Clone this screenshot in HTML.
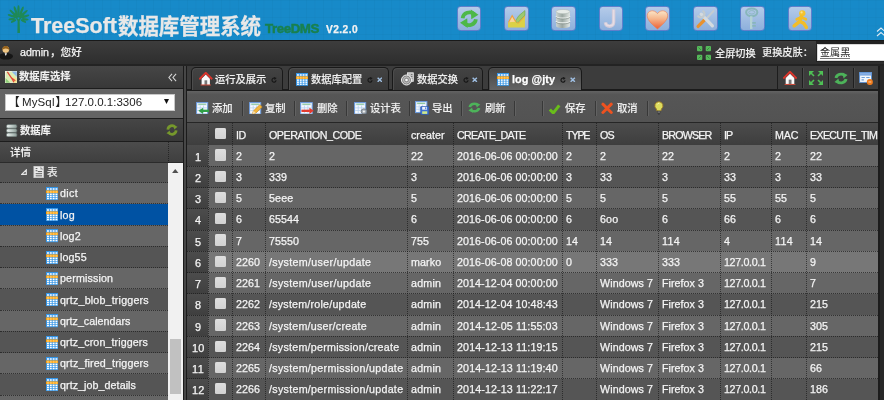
<!DOCTYPE html>
<html lang="zh"><head><meta charset="utf-8"><title>TreeSoft数据库管理系统</title>
<style>
html,body{margin:0;padding:0}
body{width:884px;height:400px;overflow:hidden;background:#2a2a2a;position:relative;font-family:"Liberation Sans","Noto Sans CJK SC",sans-serif;font-size:10.4px;color:#fff;line-height:1.3}
div,span,svg{position:absolute;box-sizing:border-box}
.t{will-change:transform;white-space:nowrap;color:#f4f4f4;-webkit-text-stroke:.25px currentColor}
.c{font-weight:500;-webkit-text-stroke:.12px currentColor;color:#f0f0f0}
#hdr{left:0;top:0;width:884px;height:40px;background-color:#178ac9;background-image:linear-gradient(rgba(0,0,0,.022) 1px,transparent 1px),linear-gradient(90deg,rgba(0,0,0,.022) 1px,transparent 1px);background-size:8.5px 8.5px}
.tb{top:5.5px;width:24.5px;height:25.5px;border-radius:3.5px;border:1px solid #607fcb;background:linear-gradient(#b5cbe9,#8db0dc)}
#ubar{left:0;top:41px;width:884px;height:23.5px;background:linear-gradient(#3d3d3d,#2d2d2d)}
.ph{background:linear-gradient(#464646,#383838);border-bottom:1px solid #1d1d1d;border-right:1.3px solid #1b1b1b}
.sep{width:2px;top:101px;height:14.5px;border-left:1px solid #383838;border-right:1px solid #626262}
.ck{width:11.3px;height:11.3px;border-radius:1.5px;background:linear-gradient(#dedede,#d2d2d2);box-shadow:0 0 .6px 0 #bbb}
.tab{top:66.6px;height:23px;border:1px solid #191919;border-bottom:none;border-radius:5px 5px 0 0;box-shadow:inset 1px 1px 0 #4c4c4c;background:linear-gradient(#434343,#383838)}
.vl{width:0;border-left:1px dotted rgba(20,20,20,.62)}
.hl{height:0;border-top:1px dotted rgba(20,20,20,.62)}
</style></head><body>

<div id="hdr"></div>
<svg style="left:4px;top:.8px" width="30" height="36" viewBox="0 0 30 36"><g fill="#1e8957"><ellipse cx="8.0" cy="18.1" rx="1.15" ry="3.6" transform="rotate(-95 8.0 18.1)"/><ellipse cx="7.7" cy="15.0" rx="1.15" ry="4.2" transform="rotate(-70 7.7 15.0)"/><ellipse cx="9.0" cy="12.0" rx="1.15" ry="4.6" transform="rotate(-45 9.0 12.0)"/><ellipse cx="11.7" cy="9.8" rx="1.15" ry="4.8" transform="rotate(-20 11.7 9.8)"/><ellipse cx="14.5" cy="8.9" rx="1.15" ry="4.6" transform="rotate(0 14.5 8.9)"/><ellipse cx="17.6" cy="9.9" rx="1.15" ry="4.8" transform="rotate(22 17.6 9.9)"/><ellipse cx="20.2" cy="12.2" rx="1.15" ry="4.6" transform="rotate(47 20.2 12.2)"/><ellipse cx="21.3" cy="15.3" rx="1.15" ry="4.2" transform="rotate(72 21.3 15.3)"/><ellipse cx="21.0" cy="18.3" rx="1.15" ry="3.6" transform="rotate(97 21.0 18.3)"/><ellipse cx="9.6" cy="20.1" rx="1.15" ry="3" transform="rotate(-118 9.6 20.1)"/><ellipse cx="19.4" cy="20.1" rx="1.15" ry="3" transform="rotate(118 19.4 20.1)"/><ellipse cx="12.3" cy="14.1" rx="1.15" ry="3" transform="rotate(-33 12.3 14.1)"/><ellipse cx="16.7" cy="14.1" rx="1.15" ry="3" transform="rotate(33 16.7 14.1)"/><ellipse cx="10.9" cy="15.4" rx="1.15" ry="2.8" transform="rotate(-60 10.9 15.4)"/><ellipse cx="18.1" cy="15.4" rx="1.15" ry="2.8" transform="rotate(60 18.1 15.4)"/><ellipse cx="14.5" cy="13.5" rx="1.15" ry="3" transform="rotate(0 14.5 13.5)"/><path d="M13.4 32L13.7 20L11.5 16.500L12.5 16L14.5 18.500L16.5 16L17.5 16.500L15.6 20L16 32Z"/></g></svg>
<span class="t" style="left:30.5px;top:13.5px;font-weight:bold;font-size:21.5px;color:#e8e8e8;line-height:1.2">TreeSoft</span>
<span class="t" style="left:117.7px;top:13.6px;font-weight:bold;font-size:20.45px;color:#e8e8e8;line-height:1.2;transform-origin:0 0;transform:scaleY(1.03)">数据库管理系统</span>
<span class="t" style="left:265px;top:20.1px;font-size:13.3px;letter-spacing:-0.42px;font-weight:bold;color:#19804e;-webkit-text-stroke:.5px #19804e;">TreeDMS</span>
<span class="t" style="left:326px;top:23.2px;font-size:10.2px;letter-spacing:0.42px;font-weight:bold;color:#f2f2f2;">V2.2.0</span>
<div class="tb" style="left:456.6px"></div>
<div class="tb" style="left:504.3px"></div>
<div class="tb" style="left:551px"></div>
<div class="tb" style="left:598.7px"></div>
<div class="tb" style="left:645.4px"></div>
<div class="tb" style="left:693px"></div>
<div class="tb" style="left:740px"></div>
<div class="tb" style="left:787.6px"></div>
<svg style="left:456.6px;top:5.5px" width="24.5" height="25.5" viewBox="0 0 24 25"><g fill="none" stroke="#4db848" stroke-width="3.6"><path d="M5.5 12A6.8 6.2 0 0 1 17 8"/><path d="M18.5 13A6.8 6.2 0 0 1 7 17"/></g><path d="M13.5 3.500L21 8.500L14 13Z" fill="#4db848"/><path d="M10.5 21.500L3 16.500L10 12Z" fill="#4db848"/></svg>
<svg style="left:504.3px;top:5.5px" width="24.5" height="25.5" viewBox="0 0 24 25"><path d="M4 21V16.500L8 11L13 16L20.5 8V21Z" fill="#dbd146"/><path d="M11 15L14.5 9.500L20.5 4.500V9L13.5 16.500Z" fill="#9dc96f" stroke="#74ad55" stroke-width=".7"/><path d="M4.5 16L8 9.500L11.5 15.5" fill="#f8d49a" stroke="#f0a040" stroke-width="1.1"/><path d="M12.5 15.500L14 17L20.5 10" fill="none" stroke="#f0a040" stroke-width=".9"/></svg>
<svg style="left:551px;top:5.5px" width="24.5" height="25.5" viewBox="0 0 24 25"><defs><linearGradient id="cy" x1="0" x2="1"><stop offset="0" stop-color="#cdd5d1"/><stop offset=".45" stop-color="#9ba7a2"/><stop offset="1" stop-color="#e3e8e5"/></linearGradient></defs><path d="M5 5.500V19.500C5 22.3 18.5 22.3 18.5 19.500V5.500Z" fill="url(#cy)"/><ellipse cx="11.750" cy="5.5" rx="6.750" ry="2.1" fill="#e6ebe8" stroke="#aab5b0" stroke-width=".5"/><path d="M5 10C5 12.4 18.5 12.4 18.5 10M5 14.800C5 17.2 18.5 17.2 18.5 14.8" fill="none" stroke="#eef2f0" stroke-width="1.2"/><path d="M5 10.900C5 13.3 18.5 13.3 18.5 10.900M5 15.700C5 18.1 18.5 18.1 18.5 15.7" fill="none" stroke="#7f8c87" stroke-width=".6"/></svg>
<svg style="left:598.7px;top:5.5px" width="24.5" height="25.5" viewBox="0 0 24 25"><path d="M14.3 3.200V16C14.3 21 6.8 21 6.3 16" fill="none" stroke="#d3cbd9" stroke-width="3.4"/><path d="M14.3 3.600V16C14.3 20.5 7 20.5 6.5 16.3" fill="none" stroke="#e6dde4" stroke-width="1.5"/></svg>
<svg style="left:645.4px;top:5.5px" width="24.5" height="25.5" viewBox="0 0 24 25"><defs><linearGradient id="ht" x1="0" y1="0" x2="0" y2="1"><stop offset="0" stop-color="#fae6c8"/><stop offset=".45" stop-color="#f5b48a"/><stop offset="1" stop-color="#ee5f33"/></linearGradient></defs><path d="M12.2 22.500C5 16.5 2.2 13 2.2 9.300C2.2 4.5 9 2.8 12.2 7.500C15.4 2.8 22.2 4.5 22.2 9.300C22.2 13 19.4 16.5 12.2 22.500Z" fill="url(#ht)" stroke="#ee7a4e" stroke-width=".6"/></svg>
<svg style="left:693px;top:5.5px" width="24.5" height="25.5" viewBox="0 0 24 25"><path d="M20 5L11.5 14" stroke="#c5ccd0" stroke-width="2" stroke-linecap="round"/><path d="M11.5 13.500L5 20" stroke="#e8922f" stroke-width="3.2" stroke-linecap="round"/><path d="M8 8L19 19.5" stroke="#d5dbde" stroke-width="3.2" stroke-linecap="round"/><path d="M9.3 4.600A3.5 3.5 0 1 1 4.6 9.3" fill="none" stroke="#c3cbcf" stroke-width="2.2"/></svg>
<svg style="left:740px;top:5.5px" width="24.5" height="25.5" viewBox="0 0 24 25"><g fill="none" stroke="#88b6bb"><ellipse cx="11.5" cy="6.2" rx="5.5" ry="3.8" stroke-width="2"/><ellipse cx="11.5" cy="6.2" rx="3" ry="1.7" stroke-width=".8"/><path d="M11 10V22.5" stroke-width="2.4" stroke="#b4d2d4"/><path d="M12 16.500H15.500M12 19.500H15.5" stroke-width="1.7"/></g></svg>
<svg style="left:787.6px;top:5.5px" width="24.5" height="25.5" viewBox="0 0 24 25"><circle cx="14" cy="7.2" r="3.1" fill="#f4c32e"/><circle cx="13.3" cy="6.3" r="1.1" fill="#fbe28a"/><path d="M13 10.500L11.5 15L6 19.500M11.5 15L15.5 17L18 21" fill="none" stroke="#f2bd28" stroke-width="3.4" stroke-linecap="round" stroke-linejoin="round"/><path d="M8.5 13L13 11L17.5 13" fill="none" stroke="#f2bd28" stroke-width="2.6" stroke-linecap="round" stroke-linejoin="round"/></svg>
<svg style="left:876px;top:27px" width="8" height="10" viewBox="0 0 8 10"><path d="M1 4.500L5 1L9 4.500M1 9L5 5.500L9 9" fill="none" stroke="#dfe9f2" stroke-width="1.1"/></svg>
<div style="left:0;top:40px;width:884px;height:1.2px;background:#191919"></div>
<div id="ubar"></div>
<svg style="left:-1.5px;top:43.500px" width="16" height="16" viewBox="0 0 16 16"><ellipse cx="7" cy="12.3" rx="7" ry="3.3" fill="#161616"/><circle cx="6.8" cy="5.6" r="3.3" fill="#f0c684"/><path d="M3.2 6.500C2.5 0.5 11.1 0.5 10.4 6.500C9.5 3.8 4.1 3.8 3.2 6.500Z" fill="#96621c"/><path d="M5.6 9.300L6.8 12L8 9.300Z" fill="#fff"/></svg>
<span class="t" style="left:20px;top:46.4px;font-size:10.7px;letter-spacing:-0.03px;">admin</span>
<span class="t c" style="left:50px;top:46.2px;font-size:10.6px;">，您好</span>
<svg style="left:697.200px;top:45.900px" width="14" height="14" viewBox="0 0 14 14"><g fill="#55b85a"><rect x="0" y="0" width="5.3" height="5.3" rx="1"/><rect x="8.7" y="0" width="5.3" height="5.3" rx="1"/><rect x="0" y="8.7" width="5.3" height="5.3" rx="1"/><rect x="8.7" y="8.7" width="5.3" height="5.3" rx="1"/></g><g stroke="#2c6a30" stroke-width=".8" opacity=".75"><path d="M1.5 1.500L4 4M12.5 1.500L10 4M1.5 12.500L4 10M12.5 12.500L10 10"/></g></svg>
<span class="t c" style="left:714.6px;top:46.6px;font-size:10.2px;">全屏切换</span>
<span class="t c" style="left:762.4px;top:45.7px;font-size:10.2px;">更换皮肤：</span>
<div style="left:815.6px;top:41px;width:70px;height:21.2px;background:#222"></div>
<div style="left:817px;top:43.6px;width:70px;height:17.7px;background:#fff;border:1px solid #d8d8d8"></div>
<span class="t c" style="left:819.5px;top:46px;font-size:10.1px;color:#222;border-bottom:1px solid #777;line-height:1.02;top:47.6px;-webkit-text-stroke:0;font-weight:400;">金属黑</span>
<div style="left:0;top:64.3px;width:884px;height:2px;background:#232323"></div>
<div style="left:0;top:65.5px;width:184.3px;height:335px;background:#646464;border-right:1.3px solid #1b1b1b"></div>
<div class="ph" style="left:0;top:65.5px;width:184.3px;height:23.5px;"></div>
<svg style="left:5px;top:70.500px" width="12.2" height="12.2" viewBox="0 0 13 13"><rect x=".5" y=".5" width="12" height="12" fill="#dcecb4" stroke="#f4f4e0"/><path d="M.5 7.500L5.5 12.500H.5Z" fill="#8fd07a"/><path d="M7 .5H12.500V6Z" fill="#8db8ea"/><path d="M6 6L12.5 8V12.500H9Z" fill="#f6e48a"/><path d="M2.5 1L7 7.500L9.5 12M7 7.500L11 10.5" stroke="#e2473c" stroke-width="1.3" fill="none"/></svg>
<span class="t c" style="left:19.3px;top:70.4px;font-size:10.3px;font-weight:bold;">数据库选择</span>
<svg style="left:168px;top:72.5px" width="9" height="9" viewBox="0 0 10 10"><path d="M4.5 1L1 5L4.5 9M9 1L5.5 5L9 9" fill="none" stroke="#d8d8d8" stroke-width="1.2"/></svg>
<div style="left:5px;top:93.6px;width:169.6px;height:17.6px;background:#fff;border:1px solid #c8c8c8"></div>
<span class="t" style="left:8px;top:94.7px;font-size:11.5px;color:#222;-webkit-text-stroke:0"><span style="position:static;font-size:11.8px;margin-right:2.2px">【</span><span style="position:static;letter-spacing:0.12px">MySql</span><span style="position:static;font-size:11.8px;margin-left:.6px">】</span><span style="position:static;margin-left:-1.9px;letter-spacing:0.02px">127.0.0.1:3306</span></span>
<svg style="left:164.3px;top:99.3px" width="5" height="5" viewBox="0 0 5 5"><path d="M0 0H5L2.5 5Z" fill="#111"/></svg>
<div class="ph" style="left:0;top:118.2px;width:184.3px;height:23.5px;border-top:1px solid #1c1c1c"></div>
<svg style="left:6px;top:123.500px" width="11.5" height="13.3" viewBox="0 0 12 14"><defs><linearGradient id="dbg" x1="0" x2="1"><stop offset="0" stop-color="#eef3f1"/><stop offset=".6" stop-color="#b5c3bf"/><stop offset="1" stop-color="#8d9b97"/></linearGradient></defs><g fill="url(#dbg)" stroke="#5f6d69" stroke-width=".7"><rect x=".5" y=".5" width="11" height="3.9" rx="1.6"/><rect x=".5" y="5" width="11" height="3.9" rx="1.6"/><rect x=".5" y="9.5" width="11" height="3.9" rx="1.6"/></g></svg>
<span class="t c" style="left:20.4px;top:123.9px;font-size:10.3px;font-weight:bold;">数据库</span>
<svg style="left:166px;top:124.3px" width="12" height="12" viewBox="0 0 13 13"><g fill="none" stroke="#76982c" stroke-width="2.9"><path d="M2 6A4.5 4.5 0 0 1 10 3.5"/><path d="M11 7A4.5 4.5 0 0 1 3 9.5"/></g><path d="M8 1L12.5 3L9 6Z" fill="#76982c"/><path d="M5 12L.5 10L4 7Z" fill="#76982c"/></svg>
<div style="left:0;top:161.25px;width:168px;height:21.75px;background:#555"></div>
<svg style="left:21px;top:168.85px" width="6" height="6.2" viewBox="0 0 6 6"><path d="M5.3 .8V5.3H.8Z" fill="#555" stroke="#e4e4e4" stroke-width="1.2"/></svg>
<svg style="left:33px;top:165.95px" width="11.3" height="12" viewBox="0 0 12 14"><rect x=".5" y=".5" width="11" height="13" fill="#ececec" stroke="#cfcfcf"/><path d="M2.5 3H4.500M2.5 5.500H4.500M5 6.500H10M2.5 9H10M2.5 11.500H10" stroke="#555" stroke-width="1.1"/><path d="M8 .5L11.5 4H8Z" fill="#999"/></svg>
<span class="t c" style="left:46.8px;top:165.85px;font-size:10.5px;">表</span>
<div style="left:0;top:182.5px;width:168px;height:21.75px;background:#666"></div>
<svg style="left:45.9px;top:186.9px" width="12.3" height="13.2" viewBox="0 0 12.2 13" preserveAspectRatio="none"><rect width="12.2" height="13" fill="#3595e6"/><rect x="0" y="3.4" width="12.2" height="2.7" fill="#fb9d0c"/><rect x="1.0" y="1.0" width="1.9" height="2.0" fill="#cfe6ff"/><rect x="3.8" y="1.0" width="1.9" height="2.0" fill="#cfe6ff"/><rect x="6.6" y="1.0" width="1.9" height="2.0" fill="#cfe6ff"/><rect x="9.4" y="1.0" width="1.9" height="2.0" fill="#cfe6ff"/><rect x="1.0" y="3.7" width="1.9" height="2.1" fill="#ffc55a"/><rect x="3.8" y="3.7" width="1.9" height="2.1" fill="#ffc55a"/><rect x="6.6" y="3.7" width="1.9" height="2.1" fill="#ffc55a"/><rect x="9.4" y="3.7" width="1.9" height="2.1" fill="#ffc55a"/><rect x="1.0" y="6.5" width="1.9" height="1.5" fill="#ffffff"/><rect x="3.8" y="6.5" width="1.9" height="1.5" fill="#ffffff"/><rect x="6.6" y="6.5" width="1.9" height="1.5" fill="#ffffff"/><rect x="9.4" y="6.5" width="1.9" height="1.5" fill="#ffffff"/><rect x="1.0" y="8.6" width="1.9" height="1.5" fill="#ffffff"/><rect x="3.8" y="8.6" width="1.9" height="1.5" fill="#ffffff"/><rect x="6.6" y="8.6" width="1.9" height="1.5" fill="#ffffff"/><rect x="9.4" y="8.6" width="1.9" height="1.5" fill="#ffffff"/><rect x="1.0" y="10.7" width="1.9" height="1.4" fill="#ffffff"/><rect x="3.8" y="10.7" width="1.9" height="1.4" fill="#ffffff"/><rect x="6.6" y="10.7" width="1.9" height="1.4" fill="#ffffff"/><rect x="9.4" y="10.7" width="1.9" height="1.4" fill="#ffffff"/></svg>
<span class="t" style="left:60.2px;top:187.3px;font-size:10.7px;letter-spacing:0.36px;">dict</span>
<div style="left:0;top:203.75px;width:168px;height:21.75px;background:#0052a3"></div>
<svg style="left:45.9px;top:208.15px" width="12.3" height="13.2" viewBox="0 0 12.2 13" preserveAspectRatio="none"><rect width="12.2" height="13" fill="#3595e6"/><rect x="0" y="3.4" width="12.2" height="2.7" fill="#fb9d0c"/><rect x="1.0" y="1.0" width="1.9" height="2.0" fill="#cfe6ff"/><rect x="3.8" y="1.0" width="1.9" height="2.0" fill="#cfe6ff"/><rect x="6.6" y="1.0" width="1.9" height="2.0" fill="#cfe6ff"/><rect x="9.4" y="1.0" width="1.9" height="2.0" fill="#cfe6ff"/><rect x="1.0" y="3.7" width="1.9" height="2.1" fill="#ffc55a"/><rect x="3.8" y="3.7" width="1.9" height="2.1" fill="#ffc55a"/><rect x="6.6" y="3.7" width="1.9" height="2.1" fill="#ffc55a"/><rect x="9.4" y="3.7" width="1.9" height="2.1" fill="#ffc55a"/><rect x="1.0" y="6.5" width="1.9" height="1.5" fill="#ffffff"/><rect x="3.8" y="6.5" width="1.9" height="1.5" fill="#ffffff"/><rect x="6.6" y="6.5" width="1.9" height="1.5" fill="#ffffff"/><rect x="9.4" y="6.5" width="1.9" height="1.5" fill="#ffffff"/><rect x="1.0" y="8.6" width="1.9" height="1.5" fill="#ffffff"/><rect x="3.8" y="8.6" width="1.9" height="1.5" fill="#ffffff"/><rect x="6.6" y="8.6" width="1.9" height="1.5" fill="#ffffff"/><rect x="9.4" y="8.6" width="1.9" height="1.5" fill="#ffffff"/><rect x="1.0" y="10.7" width="1.9" height="1.4" fill="#ffffff"/><rect x="3.8" y="10.7" width="1.9" height="1.4" fill="#ffffff"/><rect x="6.6" y="10.7" width="1.9" height="1.4" fill="#ffffff"/><rect x="9.4" y="10.7" width="1.9" height="1.4" fill="#ffffff"/></svg>
<span class="t" style="left:60.2px;top:208.55px;font-size:10.7px;letter-spacing:0.18px;">log</span>
<div style="left:0;top:225px;width:168px;height:21.75px;background:#666"></div>
<svg style="left:45.9px;top:229.4px" width="12.3" height="13.2" viewBox="0 0 12.2 13" preserveAspectRatio="none"><rect width="12.2" height="13" fill="#3595e6"/><rect x="0" y="3.4" width="12.2" height="2.7" fill="#fb9d0c"/><rect x="1.0" y="1.0" width="1.9" height="2.0" fill="#cfe6ff"/><rect x="3.8" y="1.0" width="1.9" height="2.0" fill="#cfe6ff"/><rect x="6.6" y="1.0" width="1.9" height="2.0" fill="#cfe6ff"/><rect x="9.4" y="1.0" width="1.9" height="2.0" fill="#cfe6ff"/><rect x="1.0" y="3.7" width="1.9" height="2.1" fill="#ffc55a"/><rect x="3.8" y="3.7" width="1.9" height="2.1" fill="#ffc55a"/><rect x="6.6" y="3.7" width="1.9" height="2.1" fill="#ffc55a"/><rect x="9.4" y="3.7" width="1.9" height="2.1" fill="#ffc55a"/><rect x="1.0" y="6.5" width="1.9" height="1.5" fill="#ffffff"/><rect x="3.8" y="6.5" width="1.9" height="1.5" fill="#ffffff"/><rect x="6.6" y="6.5" width="1.9" height="1.5" fill="#ffffff"/><rect x="9.4" y="6.5" width="1.9" height="1.5" fill="#ffffff"/><rect x="1.0" y="8.6" width="1.9" height="1.5" fill="#ffffff"/><rect x="3.8" y="8.6" width="1.9" height="1.5" fill="#ffffff"/><rect x="6.6" y="8.6" width="1.9" height="1.5" fill="#ffffff"/><rect x="9.4" y="8.6" width="1.9" height="1.5" fill="#ffffff"/><rect x="1.0" y="10.7" width="1.9" height="1.4" fill="#ffffff"/><rect x="3.8" y="10.7" width="1.9" height="1.4" fill="#ffffff"/><rect x="6.6" y="10.7" width="1.9" height="1.4" fill="#ffffff"/><rect x="9.4" y="10.7" width="1.9" height="1.4" fill="#ffffff"/></svg>
<span class="t" style="left:60.2px;top:229.8px;font-size:10.7px;letter-spacing:0.14px;">log2</span>
<div style="left:0;top:246.25px;width:168px;height:21.75px;background:#555"></div>
<svg style="left:45.9px;top:250.65px" width="12.3" height="13.2" viewBox="0 0 12.2 13" preserveAspectRatio="none"><rect width="12.2" height="13" fill="#3595e6"/><rect x="0" y="3.4" width="12.2" height="2.7" fill="#fb9d0c"/><rect x="1.0" y="1.0" width="1.9" height="2.0" fill="#cfe6ff"/><rect x="3.8" y="1.0" width="1.9" height="2.0" fill="#cfe6ff"/><rect x="6.6" y="1.0" width="1.9" height="2.0" fill="#cfe6ff"/><rect x="9.4" y="1.0" width="1.9" height="2.0" fill="#cfe6ff"/><rect x="1.0" y="3.7" width="1.9" height="2.1" fill="#ffc55a"/><rect x="3.8" y="3.7" width="1.9" height="2.1" fill="#ffc55a"/><rect x="6.6" y="3.7" width="1.9" height="2.1" fill="#ffc55a"/><rect x="9.4" y="3.7" width="1.9" height="2.1" fill="#ffc55a"/><rect x="1.0" y="6.5" width="1.9" height="1.5" fill="#ffffff"/><rect x="3.8" y="6.5" width="1.9" height="1.5" fill="#ffffff"/><rect x="6.6" y="6.5" width="1.9" height="1.5" fill="#ffffff"/><rect x="9.4" y="6.5" width="1.9" height="1.5" fill="#ffffff"/><rect x="1.0" y="8.6" width="1.9" height="1.5" fill="#ffffff"/><rect x="3.8" y="8.6" width="1.9" height="1.5" fill="#ffffff"/><rect x="6.6" y="8.6" width="1.9" height="1.5" fill="#ffffff"/><rect x="9.4" y="8.6" width="1.9" height="1.5" fill="#ffffff"/><rect x="1.0" y="10.7" width="1.9" height="1.4" fill="#ffffff"/><rect x="3.8" y="10.7" width="1.9" height="1.4" fill="#ffffff"/><rect x="6.6" y="10.7" width="1.9" height="1.4" fill="#ffffff"/><rect x="9.4" y="10.7" width="1.9" height="1.4" fill="#ffffff"/></svg>
<span class="t" style="left:60.2px;top:251.05px;font-size:10.7px;letter-spacing:0.12px;">log55</span>
<div style="left:0;top:267.5px;width:168px;height:21.75px;background:#666"></div>
<svg style="left:45.9px;top:271.9px" width="12.3" height="13.2" viewBox="0 0 12.2 13" preserveAspectRatio="none"><rect width="12.2" height="13" fill="#3595e6"/><rect x="0" y="3.4" width="12.2" height="2.7" fill="#fb9d0c"/><rect x="1.0" y="1.0" width="1.9" height="2.0" fill="#cfe6ff"/><rect x="3.8" y="1.0" width="1.9" height="2.0" fill="#cfe6ff"/><rect x="6.6" y="1.0" width="1.9" height="2.0" fill="#cfe6ff"/><rect x="9.4" y="1.0" width="1.9" height="2.0" fill="#cfe6ff"/><rect x="1.0" y="3.7" width="1.9" height="2.1" fill="#ffc55a"/><rect x="3.8" y="3.7" width="1.9" height="2.1" fill="#ffc55a"/><rect x="6.6" y="3.7" width="1.9" height="2.1" fill="#ffc55a"/><rect x="9.4" y="3.7" width="1.9" height="2.1" fill="#ffc55a"/><rect x="1.0" y="6.5" width="1.9" height="1.5" fill="#ffffff"/><rect x="3.8" y="6.5" width="1.9" height="1.5" fill="#ffffff"/><rect x="6.6" y="6.5" width="1.9" height="1.5" fill="#ffffff"/><rect x="9.4" y="6.5" width="1.9" height="1.5" fill="#ffffff"/><rect x="1.0" y="8.6" width="1.9" height="1.5" fill="#ffffff"/><rect x="3.8" y="8.6" width="1.9" height="1.5" fill="#ffffff"/><rect x="6.6" y="8.6" width="1.9" height="1.5" fill="#ffffff"/><rect x="9.4" y="8.6" width="1.9" height="1.5" fill="#ffffff"/><rect x="1.0" y="10.7" width="1.9" height="1.4" fill="#ffffff"/><rect x="3.8" y="10.7" width="1.9" height="1.4" fill="#ffffff"/><rect x="6.6" y="10.7" width="1.9" height="1.4" fill="#ffffff"/><rect x="9.4" y="10.7" width="1.9" height="1.4" fill="#ffffff"/></svg>
<span class="t" style="left:60.2px;top:272.3px;font-size:10.7px;letter-spacing:0.15px;">permission</span>
<div style="left:0;top:288.75px;width:168px;height:21.75px;background:#555"></div>
<svg style="left:45.9px;top:293.15px" width="12.3" height="13.2" viewBox="0 0 12.2 13" preserveAspectRatio="none"><rect width="12.2" height="13" fill="#3595e6"/><rect x="0" y="3.4" width="12.2" height="2.7" fill="#fb9d0c"/><rect x="1.0" y="1.0" width="1.9" height="2.0" fill="#cfe6ff"/><rect x="3.8" y="1.0" width="1.9" height="2.0" fill="#cfe6ff"/><rect x="6.6" y="1.0" width="1.9" height="2.0" fill="#cfe6ff"/><rect x="9.4" y="1.0" width="1.9" height="2.0" fill="#cfe6ff"/><rect x="1.0" y="3.7" width="1.9" height="2.1" fill="#ffc55a"/><rect x="3.8" y="3.7" width="1.9" height="2.1" fill="#ffc55a"/><rect x="6.6" y="3.7" width="1.9" height="2.1" fill="#ffc55a"/><rect x="9.4" y="3.7" width="1.9" height="2.1" fill="#ffc55a"/><rect x="1.0" y="6.5" width="1.9" height="1.5" fill="#ffffff"/><rect x="3.8" y="6.5" width="1.9" height="1.5" fill="#ffffff"/><rect x="6.6" y="6.5" width="1.9" height="1.5" fill="#ffffff"/><rect x="9.4" y="6.5" width="1.9" height="1.5" fill="#ffffff"/><rect x="1.0" y="8.6" width="1.9" height="1.5" fill="#ffffff"/><rect x="3.8" y="8.6" width="1.9" height="1.5" fill="#ffffff"/><rect x="6.6" y="8.6" width="1.9" height="1.5" fill="#ffffff"/><rect x="9.4" y="8.6" width="1.9" height="1.5" fill="#ffffff"/><rect x="1.0" y="10.7" width="1.9" height="1.4" fill="#ffffff"/><rect x="3.8" y="10.7" width="1.9" height="1.4" fill="#ffffff"/><rect x="6.6" y="10.7" width="1.9" height="1.4" fill="#ffffff"/><rect x="9.4" y="10.7" width="1.9" height="1.4" fill="#ffffff"/></svg>
<span class="t" style="left:60.2px;top:293.55px;font-size:10.7px;letter-spacing:0.18px;">qrtz_blob_triggers</span>
<div style="left:0;top:310px;width:168px;height:21.75px;background:#666"></div>
<svg style="left:45.9px;top:314.4px" width="12.3" height="13.2" viewBox="0 0 12.2 13" preserveAspectRatio="none"><rect width="12.2" height="13" fill="#3595e6"/><rect x="0" y="3.4" width="12.2" height="2.7" fill="#fb9d0c"/><rect x="1.0" y="1.0" width="1.9" height="2.0" fill="#cfe6ff"/><rect x="3.8" y="1.0" width="1.9" height="2.0" fill="#cfe6ff"/><rect x="6.6" y="1.0" width="1.9" height="2.0" fill="#cfe6ff"/><rect x="9.4" y="1.0" width="1.9" height="2.0" fill="#cfe6ff"/><rect x="1.0" y="3.7" width="1.9" height="2.1" fill="#ffc55a"/><rect x="3.8" y="3.7" width="1.9" height="2.1" fill="#ffc55a"/><rect x="6.6" y="3.7" width="1.9" height="2.1" fill="#ffc55a"/><rect x="9.4" y="3.7" width="1.9" height="2.1" fill="#ffc55a"/><rect x="1.0" y="6.5" width="1.9" height="1.5" fill="#ffffff"/><rect x="3.8" y="6.5" width="1.9" height="1.5" fill="#ffffff"/><rect x="6.6" y="6.5" width="1.9" height="1.5" fill="#ffffff"/><rect x="9.4" y="6.5" width="1.9" height="1.5" fill="#ffffff"/><rect x="1.0" y="8.6" width="1.9" height="1.5" fill="#ffffff"/><rect x="3.8" y="8.6" width="1.9" height="1.5" fill="#ffffff"/><rect x="6.6" y="8.6" width="1.9" height="1.5" fill="#ffffff"/><rect x="9.4" y="8.6" width="1.9" height="1.5" fill="#ffffff"/><rect x="1.0" y="10.7" width="1.9" height="1.4" fill="#ffffff"/><rect x="3.8" y="10.7" width="1.9" height="1.4" fill="#ffffff"/><rect x="6.6" y="10.7" width="1.9" height="1.4" fill="#ffffff"/><rect x="9.4" y="10.7" width="1.9" height="1.4" fill="#ffffff"/></svg>
<span class="t" style="left:60.2px;top:314.8px;font-size:10.7px;letter-spacing:0.02px;">qrtz_calendars</span>
<div style="left:0;top:331.25px;width:168px;height:21.75px;background:#555"></div>
<svg style="left:45.9px;top:335.65px" width="12.3" height="13.2" viewBox="0 0 12.2 13" preserveAspectRatio="none"><rect width="12.2" height="13" fill="#3595e6"/><rect x="0" y="3.4" width="12.2" height="2.7" fill="#fb9d0c"/><rect x="1.0" y="1.0" width="1.9" height="2.0" fill="#cfe6ff"/><rect x="3.8" y="1.0" width="1.9" height="2.0" fill="#cfe6ff"/><rect x="6.6" y="1.0" width="1.9" height="2.0" fill="#cfe6ff"/><rect x="9.4" y="1.0" width="1.9" height="2.0" fill="#cfe6ff"/><rect x="1.0" y="3.7" width="1.9" height="2.1" fill="#ffc55a"/><rect x="3.8" y="3.7" width="1.9" height="2.1" fill="#ffc55a"/><rect x="6.6" y="3.7" width="1.9" height="2.1" fill="#ffc55a"/><rect x="9.4" y="3.7" width="1.9" height="2.1" fill="#ffc55a"/><rect x="1.0" y="6.5" width="1.9" height="1.5" fill="#ffffff"/><rect x="3.8" y="6.5" width="1.9" height="1.5" fill="#ffffff"/><rect x="6.6" y="6.5" width="1.9" height="1.5" fill="#ffffff"/><rect x="9.4" y="6.5" width="1.9" height="1.5" fill="#ffffff"/><rect x="1.0" y="8.6" width="1.9" height="1.5" fill="#ffffff"/><rect x="3.8" y="8.6" width="1.9" height="1.5" fill="#ffffff"/><rect x="6.6" y="8.6" width="1.9" height="1.5" fill="#ffffff"/><rect x="9.4" y="8.6" width="1.9" height="1.5" fill="#ffffff"/><rect x="1.0" y="10.7" width="1.9" height="1.4" fill="#ffffff"/><rect x="3.8" y="10.7" width="1.9" height="1.4" fill="#ffffff"/><rect x="6.6" y="10.7" width="1.9" height="1.4" fill="#ffffff"/><rect x="9.4" y="10.7" width="1.9" height="1.4" fill="#ffffff"/></svg>
<span class="t" style="left:60.2px;top:336.05px;font-size:10.7px;letter-spacing:0.1px;">qrtz_cron_triggers</span>
<div style="left:0;top:352.5px;width:168px;height:21.75px;background:#666"></div>
<svg style="left:45.9px;top:356.9px" width="12.3" height="13.2" viewBox="0 0 12.2 13" preserveAspectRatio="none"><rect width="12.2" height="13" fill="#3595e6"/><rect x="0" y="3.4" width="12.2" height="2.7" fill="#fb9d0c"/><rect x="1.0" y="1.0" width="1.9" height="2.0" fill="#cfe6ff"/><rect x="3.8" y="1.0" width="1.9" height="2.0" fill="#cfe6ff"/><rect x="6.6" y="1.0" width="1.9" height="2.0" fill="#cfe6ff"/><rect x="9.4" y="1.0" width="1.9" height="2.0" fill="#cfe6ff"/><rect x="1.0" y="3.7" width="1.9" height="2.1" fill="#ffc55a"/><rect x="3.8" y="3.7" width="1.9" height="2.1" fill="#ffc55a"/><rect x="6.6" y="3.7" width="1.9" height="2.1" fill="#ffc55a"/><rect x="9.4" y="3.7" width="1.9" height="2.1" fill="#ffc55a"/><rect x="1.0" y="6.5" width="1.9" height="1.5" fill="#ffffff"/><rect x="3.8" y="6.5" width="1.9" height="1.5" fill="#ffffff"/><rect x="6.6" y="6.5" width="1.9" height="1.5" fill="#ffffff"/><rect x="9.4" y="6.5" width="1.9" height="1.5" fill="#ffffff"/><rect x="1.0" y="8.6" width="1.9" height="1.5" fill="#ffffff"/><rect x="3.8" y="8.6" width="1.9" height="1.5" fill="#ffffff"/><rect x="6.6" y="8.6" width="1.9" height="1.5" fill="#ffffff"/><rect x="9.4" y="8.6" width="1.9" height="1.5" fill="#ffffff"/><rect x="1.0" y="10.7" width="1.9" height="1.4" fill="#ffffff"/><rect x="3.8" y="10.7" width="1.9" height="1.4" fill="#ffffff"/><rect x="6.6" y="10.7" width="1.9" height="1.4" fill="#ffffff"/><rect x="9.4" y="10.7" width="1.9" height="1.4" fill="#ffffff"/></svg>
<span class="t" style="left:60.2px;top:357.3px;font-size:10.7px;letter-spacing:0.14px;">qrtz_fired_triggers</span>
<div style="left:0;top:373.75px;width:168px;height:21.75px;background:#555"></div>
<svg style="left:45.9px;top:378.15px" width="12.3" height="13.2" viewBox="0 0 12.2 13" preserveAspectRatio="none"><rect width="12.2" height="13" fill="#3595e6"/><rect x="0" y="3.4" width="12.2" height="2.7" fill="#fb9d0c"/><rect x="1.0" y="1.0" width="1.9" height="2.0" fill="#cfe6ff"/><rect x="3.8" y="1.0" width="1.9" height="2.0" fill="#cfe6ff"/><rect x="6.6" y="1.0" width="1.9" height="2.0" fill="#cfe6ff"/><rect x="9.4" y="1.0" width="1.9" height="2.0" fill="#cfe6ff"/><rect x="1.0" y="3.7" width="1.9" height="2.1" fill="#ffc55a"/><rect x="3.8" y="3.7" width="1.9" height="2.1" fill="#ffc55a"/><rect x="6.6" y="3.7" width="1.9" height="2.1" fill="#ffc55a"/><rect x="9.4" y="3.7" width="1.9" height="2.1" fill="#ffc55a"/><rect x="1.0" y="6.5" width="1.9" height="1.5" fill="#ffffff"/><rect x="3.8" y="6.5" width="1.9" height="1.5" fill="#ffffff"/><rect x="6.6" y="6.5" width="1.9" height="1.5" fill="#ffffff"/><rect x="9.4" y="6.5" width="1.9" height="1.5" fill="#ffffff"/><rect x="1.0" y="8.6" width="1.9" height="1.5" fill="#ffffff"/><rect x="3.8" y="8.6" width="1.9" height="1.5" fill="#ffffff"/><rect x="6.6" y="8.6" width="1.9" height="1.5" fill="#ffffff"/><rect x="9.4" y="8.6" width="1.9" height="1.5" fill="#ffffff"/><rect x="1.0" y="10.7" width="1.9" height="1.4" fill="#ffffff"/><rect x="3.8" y="10.7" width="1.9" height="1.4" fill="#ffffff"/><rect x="6.6" y="10.7" width="1.9" height="1.4" fill="#ffffff"/><rect x="9.4" y="10.7" width="1.9" height="1.4" fill="#ffffff"/></svg>
<span class="t" style="left:60.2px;top:378.55px;font-size:10.7px;letter-spacing:0.07px;">qrtz_job_details</span>
<div style="left:0;top:395px;width:168px;height:21.75px;background:#666"></div>
<div class="hl" style="left:0;top:182px;width:168px"></div>
<div class="hl" style="left:0;top:203px;width:168px"></div>
<div class="hl" style="left:0;top:225px;width:168px"></div>
<div class="hl" style="left:0;top:246px;width:168px"></div>
<div class="hl" style="left:0;top:267px;width:168px"></div>
<div class="hl" style="left:0;top:288px;width:168px"></div>
<div class="hl" style="left:0;top:310px;width:168px"></div>
<div class="hl" style="left:0;top:331px;width:168px"></div>
<div class="hl" style="left:0;top:352px;width:168px"></div>
<div class="hl" style="left:0;top:373px;width:168px"></div>
<div class="hl" style="left:0;top:395px;width:168px"></div>
<div class="hl" style="left:0;top:416px;width:168px"></div>
<div style="left:0;top:142px;width:183px;height:21px;background:linear-gradient(#4c4c4c,#3f3f3f);border-bottom:1.5px solid #2b2b2b"></div>
<div class="vl" style="left:167.5px;top:142px;height:21px"></div>
<span class="t c" style="left:9.5px;top:146.4px;font-size:10.5px;">详情</span>
<div style="left:168.3px;top:163.4px;width:14.5px;height:237px;background:#f1f1f1"></div>
<svg style="left:172.3px;top:169.2px" width="6.5" height="4" viewBox="0 0 8 5"><path d="M0 5L4 0L8 5Z" fill="#505050"/></svg>
<div style="left:170px;top:338.8px;width:10.8px;height:55.7px;background:#c1c1c1"></div>
<div style="left:184.3px;top:65.5px;width:3px;height:335px;background:#474747;border-right:1.6px solid #1b1b1b"></div>
<div style="left:187.3px;top:65.5px;width:691px;height:25px;background:#3c3c3c"></div>
<div style="left:187.3px;top:91px;width:691px;height:32px;background:linear-gradient(#636363,#565656 12%,#535353);border-bottom:1.2px solid #262626"></div>
<div style="left:187.3px;top:89.4px;width:691px;height:1.8px;background:#1b1b1b"></div>
<div class="tab" style="left:190.7px;width:92.3px;"></div>
<div class="tab" style="left:287.5px;width:101.5px;"></div>
<div class="tab" style="left:392.4px;width:91px;"></div>
<div class="tab" style="left:488.4px;width:93.4px;background:linear-gradient(#454545,#646464);"></div>
<svg style="left:199.2px;top:72px" width="13.5" height="13.5" viewBox="0 0 13 13"><path d="M2.5 6.500V12.500H10.500V6.500L6.5 2.500Z" fill="#fafafa"/><rect x="5.3" y="8" width="2.6" height="4.5" fill="#777"/><path d="M.3 7L6.5 .8L12.7 7" fill="none" stroke="#d9342b" stroke-width="1.9"/><rect x="1.5" y="12" width="10" height="1" fill="#c94a3a"/></svg>
<span class="t c" style="left:214.8px;top:72.9px;font-size:10.25px;">运行及展示</span>
<svg style="left:270.8px;top:77px" width="6" height="6" viewBox="0 0 6 6"><path d="M5 3.200A2 2 0 1 1 3.8 1.3" fill="none" stroke="#171717" stroke-width="1.2"/><path d="M3 0L5.6 1L3.6 2.900Z" fill="#171717"/></svg>
<svg style="left:296px;top:73px" width="12.2" height="12.8" viewBox="0 0 12.2 13" preserveAspectRatio="none"><rect width="12.2" height="13" fill="#3595e6"/><rect x="0" y="3.4" width="12.2" height="2.7" fill="#fb9d0c"/><rect x="1.0" y="1.0" width="1.9" height="2.0" fill="#cfe6ff"/><rect x="3.8" y="1.0" width="1.9" height="2.0" fill="#cfe6ff"/><rect x="6.6" y="1.0" width="1.9" height="2.0" fill="#cfe6ff"/><rect x="9.4" y="1.0" width="1.9" height="2.0" fill="#cfe6ff"/><rect x="1.0" y="3.7" width="1.9" height="2.1" fill="#ffc55a"/><rect x="3.8" y="3.7" width="1.9" height="2.1" fill="#ffc55a"/><rect x="6.6" y="3.7" width="1.9" height="2.1" fill="#ffc55a"/><rect x="9.4" y="3.7" width="1.9" height="2.1" fill="#ffc55a"/><rect x="1.0" y="6.5" width="1.9" height="1.5" fill="#ffffff"/><rect x="3.8" y="6.5" width="1.9" height="1.5" fill="#ffffff"/><rect x="6.6" y="6.5" width="1.9" height="1.5" fill="#ffffff"/><rect x="9.4" y="6.5" width="1.9" height="1.5" fill="#ffffff"/><rect x="1.0" y="8.6" width="1.9" height="1.5" fill="#ffffff"/><rect x="3.8" y="8.6" width="1.9" height="1.5" fill="#ffffff"/><rect x="6.6" y="8.6" width="1.9" height="1.5" fill="#ffffff"/><rect x="9.4" y="8.6" width="1.9" height="1.5" fill="#ffffff"/><rect x="1.0" y="10.7" width="1.9" height="1.4" fill="#ffffff"/><rect x="3.8" y="10.7" width="1.9" height="1.4" fill="#ffffff"/><rect x="6.6" y="10.7" width="1.9" height="1.4" fill="#ffffff"/><rect x="9.4" y="10.7" width="1.9" height="1.4" fill="#ffffff"/></svg>
<span class="t c" style="left:311.3px;top:72.9px;font-size:10.25px;">数据库配置</span>
<svg style="left:367.2px;top:77px" width="6" height="6" viewBox="0 0 6 6"><path d="M5 3.200A2 2 0 1 1 3.8 1.3" fill="none" stroke="#171717" stroke-width="1.2"/><path d="M3 0L5.6 1L3.6 2.900Z" fill="#171717"/></svg>
<svg style="left:376.7px;top:76.5px" width="5.5" height="5.5" viewBox="0 0 6 6"><path d="M.7 .7L5.3 5.300M5.3 .7L.7 5.3" stroke="#9fbfe3" stroke-width="1.5"/></svg>
<svg style="left:400.5px;top:72.3px" width="13" height="13.5" viewBox="0 0 13 13.5"><rect x="6.5" y=".8" width="5.8" height="8.5" fill="#bdbdbd" stroke="#f0f0f0" stroke-width=".8"/><path d="M10.8 2V8" stroke="#555" stroke-width="1" stroke-dasharray="1 1"/><circle cx="5.5" cy="8" r="5" fill="#8a8a8a" stroke="#f2f2f2" stroke-width="1"/><circle cx="5.5" cy="8" r="3" fill="none" stroke="#d0d0d0" stroke-width=".8"/><circle cx="5.5" cy="8" r="1.3" fill="#f6f6f6"/></svg>
<span class="t c" style="left:416.8px;top:72.9px;font-size:10.25px;">数据交换</span>
<svg style="left:462.7px;top:77px" width="6" height="6" viewBox="0 0 6 6"><path d="M5 3.200A2 2 0 1 1 3.8 1.3" fill="none" stroke="#171717" stroke-width="1.2"/><path d="M3 0L5.6 1L3.6 2.900Z" fill="#171717"/></svg>
<svg style="left:472.2px;top:76.5px" width="5.5" height="5.5" viewBox="0 0 6 6"><path d="M.7 .7L5.3 5.300M5.3 .7L.7 5.3" stroke="#9fbfe3" stroke-width="1.5"/></svg>
<svg style="left:497px;top:73px" width="12.2" height="12.8" viewBox="0 0 12.2 13" preserveAspectRatio="none"><rect width="12.2" height="13" fill="#3595e6"/><rect x="0" y="3.4" width="12.2" height="2.7" fill="#fb9d0c"/><rect x="1.0" y="1.0" width="1.9" height="2.0" fill="#cfe6ff"/><rect x="3.8" y="1.0" width="1.9" height="2.0" fill="#cfe6ff"/><rect x="6.6" y="1.0" width="1.9" height="2.0" fill="#cfe6ff"/><rect x="9.4" y="1.0" width="1.9" height="2.0" fill="#cfe6ff"/><rect x="1.0" y="3.7" width="1.9" height="2.1" fill="#ffc55a"/><rect x="3.8" y="3.7" width="1.9" height="2.1" fill="#ffc55a"/><rect x="6.6" y="3.7" width="1.9" height="2.1" fill="#ffc55a"/><rect x="9.4" y="3.7" width="1.9" height="2.1" fill="#ffc55a"/><rect x="1.0" y="6.5" width="1.9" height="1.5" fill="#ffffff"/><rect x="3.8" y="6.5" width="1.9" height="1.5" fill="#ffffff"/><rect x="6.6" y="6.5" width="1.9" height="1.5" fill="#ffffff"/><rect x="9.4" y="6.5" width="1.9" height="1.5" fill="#ffffff"/><rect x="1.0" y="8.6" width="1.9" height="1.5" fill="#ffffff"/><rect x="3.8" y="8.6" width="1.9" height="1.5" fill="#ffffff"/><rect x="6.6" y="8.6" width="1.9" height="1.5" fill="#ffffff"/><rect x="9.4" y="8.6" width="1.9" height="1.5" fill="#ffffff"/><rect x="1.0" y="10.7" width="1.9" height="1.4" fill="#ffffff"/><rect x="3.8" y="10.7" width="1.9" height="1.4" fill="#ffffff"/><rect x="6.6" y="10.7" width="1.9" height="1.4" fill="#ffffff"/><rect x="9.4" y="10.7" width="1.9" height="1.4" fill="#ffffff"/></svg>
<span class="t" style="left:512.3px;top:71.6px;font-size:10.9px;letter-spacing:0.04px;font-weight:bold;color:#fff;">log @jty</span>
<svg style="left:560.4px;top:77px" width="6" height="6" viewBox="0 0 6 6"><path d="M5 3.200A2 2 0 1 1 3.8 1.3" fill="none" stroke="#171717" stroke-width="1.2"/><path d="M3 0L5.6 1L3.6 2.900Z" fill="#171717"/></svg>
<svg style="left:570px;top:76.5px" width="5.5" height="5.5" viewBox="0 0 6 6"><path d="M.7 .7L5.3 5.300M5.3 .7L.7 5.3" stroke="#9fbfe3" stroke-width="1.5"/></svg>
<div style="left:777px;top:65.5px;width:101px;height:24.6px;background:#3c3c3c;border-left:1px solid #1d1d1d;border-bottom:1px solid #1d1d1d"></div>
<div style="left:802px;top:68px;width:2px;height:20px;border-left:1px solid #1f1f1f;border-right:1px solid #4a4a4a"></div>
<div style="left:827.7px;top:68px;width:2px;height:20px;border-left:1px solid #1f1f1f;border-right:1px solid #4a4a4a"></div>
<div style="left:853px;top:68px;width:2px;height:20px;border-left:1px solid #1f1f1f;border-right:1px solid #4a4a4a"></div>
<svg style="left:783px;top:71px" width="14" height="14" viewBox="0 0 13 13"><path d="M2.5 6.500V12.500H10.500V6.500L6.5 2.500Z" fill="#fafafa"/><rect x="5.3" y="8" width="2.6" height="4.5" fill="#777"/><path d="M.3 7L6.5 .8L12.7 7" fill="none" stroke="#d9342b" stroke-width="1.9"/><rect x="1.5" y="12" width="10" height="1" fill="#c94a3a"/></svg>
<svg style="left:808.5px;top:71px" width="14" height="14" viewBox="0 0 14 14"><g fill="#4fbf55"><path d="M0 0H5L0 5Z"/><path d="M14 0H9L14 5Z"/><path d="M0 14H5L0 9Z"/><path d="M14 14H9L14 9Z"/></g><g stroke="#4fbf55" stroke-width="1.6"><path d="M1.5 1.500L5 5M12.5 1.500L9 5M1.5 12.500L5 9M12.5 12.500L9 9"/></g></svg>
<svg style="left:834px;top:71.5px" width="14" height="13" viewBox="0 0 14 13"><g fill="none" stroke="#4db35a" stroke-width="2.9"><path d="M2 6A5 4.5 0 0 1 10.5 3.5"/><path d="M12 7A5 4.5 0 0 1 3.5 9.5"/></g><path d="M8.5 .5L13.5 3L9.5 6.500Z" fill="#4db35a"/><path d="M5.5 12.500L.5 10L4.5 6.500Z" fill="#4db35a"/></svg>
<svg style="left:858.800px;top:72.200px" width="14.5" height="13.3" viewBox="0 0 15 14"><rect x=".5" y=".5" width="12.5" height="10.5" fill="#f1f6fc" stroke="#5b8fd0"/><rect x=".5" y=".5" width="12.5" height="2.8" fill="#86aee4" stroke="#5b8fd0" stroke-width=".6"/><path d="M2.5 5.800H6M2.5 8.300H5M7.5 5.800H11" stroke="#6f9fd8" stroke-width="1.2"/><circle cx="11.3" cy="10.5" r="3.2" fill="#ef7a1a"/><path d="M9.8 10.500H12.8" stroke="#fbd2ac" stroke-width="1"/></svg>
<div style="left:877.8px;top:65.5px;width:6.2px;height:335px;background:#272727;border-left:2px solid #1c1c1c"></div>
<svg style="left:195.7px;top:101.6px" width="13.2" height="12.6" viewBox="0 0 14 14" preserveAspectRatio="none"><rect x=".6" y=".6" width="11.8" height="12.8" fill="#f7fafe" stroke="#6d9bdc" stroke-width="1.1"/><rect x="1.2" y="1.2" width="10.6" height="2.6" fill="#d5e4f7"/><path d="M2.5 2.500H10.5" stroke="#7fc383" stroke-width="1"/><path d="M1.2 6.500H11.800M1.2 9.500H11.800M4.5 4V13M8 4V13" stroke="#b9d2f0" stroke-width=".9"/><path d="M14 9.800H7" stroke="#2f9f46" stroke-width="2.6"/><path d="M7.5 6.300L2.5 9.800L7.5 13.300Z" fill="#2f9f46"/></svg>
<span class="t c" style="left:212.4px;top:102.4px;font-size:10.3px;">添加</span>
<svg style="left:249.4px;top:101.6px" width="13.2" height="12.6" viewBox="0 0 14 14" preserveAspectRatio="none"><rect x=".6" y=".6" width="11.8" height="12.8" fill="#f7fafe" stroke="#6d9bdc" stroke-width="1.1"/><rect x="1.2" y="1.2" width="10.6" height="2.6" fill="#d5e4f7"/><path d="M2.5 2.500H10.5" stroke="#7fc383" stroke-width="1"/><path d="M1.2 6.500H11.800M1.2 9.500H11.800M4.5 4V13M8 4V13" stroke="#b9d2f0" stroke-width=".9"/><path d="M3.5 13.500L4.8 9.800L11.5 3L14 5.500L7.3 12.300Z" fill="#f4b63c" stroke="#c8861a" stroke-width=".7"/><path d="M3.5 13.500L4.8 9.800L7.3 12.300Z" fill="#f7e0b0"/></svg>
<span class="t c" style="left:265px;top:102.4px;font-size:10.3px;">复制</span>
<svg style="left:300.2px;top:101.6px" width="13.8" height="12.6" viewBox="0 0 14 14" preserveAspectRatio="none"><rect x=".6" y=".6" width="11.8" height="12.8" fill="#f7fafe" stroke="#6d9bdc" stroke-width="1.1"/><rect x="1.2" y="1.2" width="10.6" height="2.6" fill="#d5e4f7"/><path d="M2.5 2.500H10.5" stroke="#7fc383" stroke-width="1"/><path d="M1.2 6.500H11.800M1.2 9.500H11.800M4.5 4V13M8 4V13" stroke="#b9d2f0" stroke-width=".9"/><path d="M1.5 9.800H10" stroke="#e23b30" stroke-width="2.6"/><path d="M9.5 6.300L14 9.800L9.5 13.300Z" fill="#e23b30"/></svg>
<span class="t c" style="left:316.8px;top:102.4px;font-size:10.3px;">删除</span>
<svg style="left:353.6px;top:101.6px" width="13.2" height="12.6" viewBox="0 0 14 14" preserveAspectRatio="none"><rect x=".6" y=".6" width="11.8" height="12.8" fill="#f7fafe" stroke="#6d9bdc" stroke-width="1.1"/><rect x="1.2" y="1.2" width="10.6" height="2.6" fill="#d5e4f7"/><path d="M2.5 2.500H10.5" stroke="#7fc383" stroke-width="1"/><path d="M1.2 6.500H11.800M1.2 9.500H11.800M4.5 4V13M8 4V13" stroke="#b9d2f0" stroke-width=".9"/><circle cx="10.5" cy="10.5" r="2.9" fill="#a5adb5" stroke="#707981" stroke-width=".9"/><circle cx="10.5" cy="10.5" r="1.1" fill="#f3f3f3"/></svg>
<span class="t c" style="left:370px;top:102.4px;font-size:10.3px;">设计表</span>
<svg style="left:415px;top:101px" width="14.2" height="13.8" viewBox="0 0 14.2 13.8"><rect x=".55" y=".55" width="11.3" height="11" fill="#f7fafe" stroke="#6d9bdc" stroke-width="1.1"/><rect x="1.1" y="1.1" width="10.2" height="2.4" fill="#d5e4f7"/><path d="M2.2 2.300H10" stroke="#7fc383" stroke-width="1"/><path d="M1.1 5.800H11M1.1 8.300H11M4.2 3.600V11M7.5 3.600V11" stroke="#b9d2f0" stroke-width=".8"/><rect x="5.6" y="5.5" width="8.2" height="8" rx=".8" fill="#3f72d2" stroke="#2c57ab" stroke-width=".6"/><rect x="7.2" y="5.9" width="4.8" height="2.8" fill="#eef3fc"/><rect x="10.2" y="6.3" width="1.1" height="1.9" fill="#3f72d2"/><rect x="7.2" y="10.3" width="5" height="2.6" fill="#cfe88a"/></svg>
<span class="t c" style="left:432.2px;top:102.4px;font-size:10.3px;">导出</span>
<svg style="left:468.2px;top:101.8px" width="12.8" height="12" viewBox="0 0 14 14" preserveAspectRatio="none"><g fill="none" stroke="#4db35a" stroke-width="2.9"><path d="M2 6A5 4.5 0 0 1 10.5 3.5"/><path d="M12 7A5 4.5 0 0 1 3.5 9.5"/></g><path d="M8.5 .5L13.5 3L9.5 6.500Z" fill="#4db35a"/><path d="M5.5 12.500L.5 10L4.5 6.500Z" fill="#4db35a"/></svg>
<span class="t c" style="left:484.6px;top:102.4px;font-size:10.3px;">刷新</span>
<svg style="left:548.3px;top:102.6px" width="12.8" height="11.8" viewBox="0 0 14 14" preserveAspectRatio="none"><path d="M2 7.800L5.8 11.800L12.3 2.8" fill="none" stroke="#69bd1a" stroke-width="3.3" stroke-linejoin="round"/></svg>
<span class="t c" style="left:565.4px;top:102.4px;font-size:10.3px;">保存</span>
<svg style="left:601.4px;top:102.2px" width="12.2" height="12.2" viewBox="0 0 14 14" preserveAspectRatio="none"><path d="M2.2 2.500L11.8 12M11.8 2.500L2.2 12" stroke="#ee5220" stroke-width="3.4" stroke-linecap="round"/></svg>
<span class="t c" style="left:617px;top:102.4px;font-size:10.3px;">取消</span>
<svg style="left:654.300px;top:101.300px" width="9.8" height="13.6" viewBox="0 0 10 14"><path d="M5 .7A4.2 4.2 0 0 1 7.6 8.200L7 10.300H3L2.4 8.200A4.2 4.2 0 0 1 5 .7Z" fill="#dcdc5e" stroke="#9c7a26" stroke-width=".9"/><path d="M3.5 3.500A2.2 2.2 0 0 1 5.5 2.3" fill="none" stroke="#f7f7c8" stroke-width=".9"/><rect x="3.3" y="10.3" width="3.4" height="2.6" fill="#6a6a6a" stroke="#3a3a3a" stroke-width=".5"/><rect x="4.2" y="12.9" width="1.6" height=".9" fill="#2a2a2a"/></svg>
<div class="sep" style="left:241.6px"></div>
<div class="sep" style="left:293.8px"></div>
<div class="sep" style="left:346.2px"></div>
<div class="sep" style="left:408.8px"></div>
<div class="sep" style="left:461.4px"></div>
<div class="sep" style="left:513.8px"></div>
<div class="sep" style="left:541.7px"></div>
<div class="sep" style="left:594.7px"></div>
<div class="sep" style="left:647.4px"></div>
<div style="left:187.3px;top:123.2px;width:690.5px;height:21.8px;background:linear-gradient(#4c4c4c,#3e3e3e)"></div>
<div style="left:208.4px;top:145px;width:669.4px;height:21.55px;background:#666"></div>
<div style="left:187.3px;top:145px;width:21.1px;height:21.55px;background:linear-gradient(#4c4c4c,#3f3f3f)"></div>
<span class="t" style="left:195.04px;top:149.7px;font-size:10.9px;letter-spacing:0.16px;">1</span>
<div class="ck" style="left:214.6px;top:149.4px"></div>
<span class="t" style="left:235.9px;top:149.7px;font-size:10.7px;letter-spacing:0.03px;">2</span>
<span class="t" style="left:268.6px;top:149.7px;font-size:10.7px;letter-spacing:0.03px;">2</span>
<span class="t" style="left:411.2px;top:149.7px;font-size:10.7px;letter-spacing:0.03px;">22</span>
<span class="t" style="left:456.6px;top:149.7px;font-size:10.7px;letter-spacing:0.08px;">2016-06-06 00:00:00</span>
<span class="t" style="left:565.8px;top:149.7px;font-size:10.7px;letter-spacing:0.03px;">2</span>
<span class="t" style="left:600.3px;top:149.7px;font-size:10.7px;letter-spacing:0.03px;">2</span>
<span class="t" style="left:662.4px;top:149.7px;font-size:10.7px;letter-spacing:0.03px;">22</span>
<span class="t" style="left:724px;top:149.7px;font-size:10.7px;letter-spacing:0.03px;">2</span>
<span class="t" style="left:775.3px;top:149.7px;font-size:10.7px;letter-spacing:0.03px;">2</span>
<span class="t" style="left:809.8px;top:149.7px;font-size:10.7px;letter-spacing:0.03px;">22</span>
<div style="left:208.4px;top:166.25px;width:669.4px;height:21.55px;background:#555"></div>
<div style="left:187.3px;top:166.25px;width:21.1px;height:21.55px;background:linear-gradient(#4c4c4c,#3f3f3f)"></div>
<span class="t" style="left:195.04px;top:170.95px;font-size:10.9px;letter-spacing:0.16px;">2</span>
<div class="ck" style="left:214.6px;top:170.65px"></div>
<span class="t" style="left:235.9px;top:170.95px;font-size:10.7px;letter-spacing:0.03px;">3</span>
<span class="t" style="left:268.6px;top:170.95px;font-size:10.7px;letter-spacing:0.03px;">339</span>
<span class="t" style="left:411.2px;top:170.95px;font-size:10.7px;letter-spacing:0.03px;">3</span>
<span class="t" style="left:456.6px;top:170.95px;font-size:10.7px;letter-spacing:0.08px;">2016-06-06 00:00:00</span>
<span class="t" style="left:565.8px;top:170.95px;font-size:10.7px;letter-spacing:0.03px;">3</span>
<span class="t" style="left:600.3px;top:170.95px;font-size:10.7px;letter-spacing:0.03px;">33</span>
<span class="t" style="left:662.4px;top:170.95px;font-size:10.7px;letter-spacing:0.03px;">3</span>
<span class="t" style="left:724px;top:170.95px;font-size:10.7px;letter-spacing:0.03px;">33</span>
<span class="t" style="left:775.3px;top:170.95px;font-size:10.7px;letter-spacing:0.03px;">3</span>
<span class="t" style="left:809.8px;top:170.95px;font-size:10.7px;letter-spacing:0.03px;">33</span>
<div style="left:208.4px;top:187.5px;width:669.4px;height:21.55px;background:#666"></div>
<div style="left:187.3px;top:187.5px;width:21.1px;height:21.55px;background:linear-gradient(#4c4c4c,#3f3f3f)"></div>
<span class="t" style="left:195.04px;top:192.2px;font-size:10.9px;letter-spacing:0.16px;">3</span>
<div class="ck" style="left:214.6px;top:191.9px"></div>
<span class="t" style="left:235.9px;top:192.2px;font-size:10.7px;letter-spacing:0.03px;">5</span>
<span class="t" style="left:268.6px;top:192.2px;font-size:10.7px;letter-spacing:0.17px;">5eee</span>
<span class="t" style="left:411.2px;top:192.2px;font-size:10.7px;letter-spacing:0.03px;">5</span>
<span class="t" style="left:456.6px;top:192.2px;font-size:10.7px;letter-spacing:0.08px;">2016-06-06 00:00:00</span>
<span class="t" style="left:565.8px;top:192.2px;font-size:10.7px;letter-spacing:0.03px;">5</span>
<span class="t" style="left:600.3px;top:192.2px;font-size:10.7px;letter-spacing:0.03px;">5</span>
<span class="t" style="left:662.4px;top:192.2px;font-size:10.7px;letter-spacing:0.03px;">5</span>
<span class="t" style="left:724px;top:192.2px;font-size:10.7px;letter-spacing:0.03px;">55</span>
<span class="t" style="left:775.3px;top:192.2px;font-size:10.7px;letter-spacing:0.03px;">55</span>
<span class="t" style="left:809.8px;top:192.2px;font-size:10.7px;letter-spacing:0.03px;">5</span>
<div style="left:208.4px;top:208.75px;width:669.4px;height:21.55px;background:#555"></div>
<div style="left:187.3px;top:208.75px;width:21.1px;height:21.55px;background:linear-gradient(#4c4c4c,#3f3f3f)"></div>
<span class="t" style="left:195.04px;top:213.45px;font-size:10.9px;letter-spacing:0.16px;">4</span>
<div class="ck" style="left:214.6px;top:213.15px"></div>
<span class="t" style="left:235.9px;top:213.45px;font-size:10.7px;letter-spacing:0.03px;">6</span>
<span class="t" style="left:268.6px;top:213.45px;font-size:10.7px;letter-spacing:0.03px;">65544</span>
<span class="t" style="left:411.2px;top:213.45px;font-size:10.7px;letter-spacing:0.03px;">6</span>
<span class="t" style="left:456.6px;top:213.45px;font-size:10.7px;letter-spacing:0.08px;">2016-06-06 00:00:00</span>
<span class="t" style="left:565.8px;top:213.45px;font-size:10.7px;letter-spacing:0.03px;">6</span>
<span class="t" style="left:600.3px;top:213.45px;font-size:10.7px;letter-spacing:0.16px;">6oo</span>
<span class="t" style="left:662.4px;top:213.45px;font-size:10.7px;letter-spacing:0.03px;">6</span>
<span class="t" style="left:724px;top:213.45px;font-size:10.7px;letter-spacing:0.03px;">66</span>
<span class="t" style="left:775.3px;top:213.45px;font-size:10.7px;letter-spacing:0.03px;">6</span>
<span class="t" style="left:809.8px;top:213.45px;font-size:10.7px;letter-spacing:0.03px;">6</span>
<div style="left:208.4px;top:230px;width:669.4px;height:21.55px;background:#666"></div>
<div style="left:187.3px;top:230px;width:21.1px;height:21.55px;background:linear-gradient(#4c4c4c,#3f3f3f)"></div>
<span class="t" style="left:195.04px;top:234.7px;font-size:10.9px;letter-spacing:0.16px;">5</span>
<div class="ck" style="left:214.6px;top:234.4px"></div>
<span class="t" style="left:235.9px;top:234.7px;font-size:10.7px;letter-spacing:0.03px;">7</span>
<span class="t" style="left:268.6px;top:234.7px;font-size:10.7px;letter-spacing:0.03px;">75550</span>
<span class="t" style="left:411.2px;top:234.7px;font-size:10.7px;letter-spacing:0.03px;">755</span>
<span class="t" style="left:456.6px;top:234.7px;font-size:10.7px;letter-spacing:0.08px;">2016-06-06 00:00:00</span>
<span class="t" style="left:565.8px;top:234.7px;font-size:10.7px;letter-spacing:0.03px;">14</span>
<span class="t" style="left:600.3px;top:234.7px;font-size:10.7px;letter-spacing:0.03px;">14</span>
<span class="t" style="left:662.4px;top:234.7px;font-size:10.7px;letter-spacing:0.29px;">114</span>
<span class="t" style="left:724px;top:234.7px;font-size:10.7px;letter-spacing:0.03px;">4</span>
<span class="t" style="left:775.3px;top:234.7px;font-size:10.7px;letter-spacing:0.29px;">114</span>
<span class="t" style="left:809.8px;top:234.7px;font-size:10.7px;letter-spacing:0.03px;">14</span>
<div style="left:208.4px;top:251.25px;width:669.4px;height:21.55px;background:#777"></div>
<div style="left:187.3px;top:251.25px;width:21.1px;height:21.55px;background:linear-gradient(#4c4c4c,#3f3f3f)"></div>
<span class="t" style="left:195.04px;top:255.95px;font-size:10.9px;letter-spacing:0.16px;">6</span>
<div class="ck" style="left:214.6px;top:255.65px"></div>
<span class="t" style="left:235.9px;top:255.95px;font-size:10.7px;letter-spacing:0.03px;">2260</span>
<span class="t" style="left:268.6px;top:255.95px;font-size:10.7px;letter-spacing:0.32px;">/system/user/update</span>
<span class="t" style="left:411.2px;top:255.95px;font-size:10.7px;letter-spacing:0.11px;">marko</span>
<span class="t" style="left:456.6px;top:255.95px;font-size:10.7px;letter-spacing:0.08px;">2016-06-08 00:00:00</span>
<span class="t" style="left:565.8px;top:255.95px;font-size:10.7px;letter-spacing:0.03px;">0</span>
<span class="t" style="left:600.3px;top:255.95px;font-size:10.7px;letter-spacing:0.03px;">333</span>
<span class="t" style="left:662.4px;top:255.95px;font-size:10.7px;letter-spacing:0.03px;">333</span>
<span class="t" style="left:724px;top:255.95px;font-size:10.7px;letter-spacing:-0.34px;">127.0.0.1</span>
<span class="t" style="left:809.8px;top:255.95px;font-size:10.7px;letter-spacing:0.03px;">9</span>
<div style="left:208.4px;top:272.5px;width:669.4px;height:21.55px;background:#666"></div>
<div style="left:187.3px;top:272.5px;width:21.1px;height:21.55px;background:linear-gradient(#4c4c4c,#3f3f3f)"></div>
<span class="t" style="left:195.04px;top:277.2px;font-size:10.9px;letter-spacing:0.16px;">7</span>
<div class="ck" style="left:214.6px;top:276.9px"></div>
<span class="t" style="left:235.9px;top:277.2px;font-size:10.7px;letter-spacing:0.03px;">2261</span>
<span class="t" style="left:268.6px;top:277.2px;font-size:10.7px;letter-spacing:0.32px;">/system/user/update</span>
<span class="t" style="left:411.2px;top:277.2px;font-size:10.7px;letter-spacing:0.23px;">admin</span>
<span class="t" style="left:456.6px;top:277.2px;font-size:10.7px;letter-spacing:0.08px;">2014-12-04 00:00:00</span>
<span class="t" style="left:600.3px;top:277.2px;font-size:10.7px;letter-spacing:0.1px;">Windows 7</span>
<span class="t" style="left:662.4px;top:277.2px;font-size:10.7px;letter-spacing:0.04px;">Firefox 3</span>
<span class="t" style="left:724px;top:277.2px;font-size:10.7px;letter-spacing:-0.34px;">127.0.0.1</span>
<span class="t" style="left:809.8px;top:277.2px;font-size:10.7px;letter-spacing:0.03px;">7</span>
<div style="left:208.4px;top:293.75px;width:669.4px;height:21.55px;background:#555"></div>
<div style="left:187.3px;top:293.75px;width:21.1px;height:21.55px;background:linear-gradient(#4c4c4c,#3f3f3f)"></div>
<span class="t" style="left:195.04px;top:298.45px;font-size:10.9px;letter-spacing:0.16px;">8</span>
<div class="ck" style="left:214.6px;top:298.15px"></div>
<span class="t" style="left:235.9px;top:298.45px;font-size:10.7px;letter-spacing:0.03px;">2262</span>
<span class="t" style="left:268.6px;top:298.45px;font-size:10.7px;letter-spacing:0.22px;">/system/role/update</span>
<span class="t" style="left:411.2px;top:298.45px;font-size:10.7px;letter-spacing:0.23px;">admin</span>
<span class="t" style="left:456.6px;top:298.45px;font-size:10.7px;letter-spacing:0.08px;">2014-12-04 10:48:43</span>
<span class="t" style="left:600.3px;top:298.45px;font-size:10.7px;letter-spacing:0.1px;">Windows 7</span>
<span class="t" style="left:662.4px;top:298.45px;font-size:10.7px;letter-spacing:0.04px;">Firefox 3</span>
<span class="t" style="left:724px;top:298.45px;font-size:10.7px;letter-spacing:-0.34px;">127.0.0.1</span>
<span class="t" style="left:809.8px;top:298.45px;font-size:10.7px;letter-spacing:0.03px;">215</span>
<div style="left:208.4px;top:315px;width:669.4px;height:21.55px;background:#666"></div>
<div style="left:187.3px;top:315px;width:21.1px;height:21.55px;background:linear-gradient(#4c4c4c,#3f3f3f)"></div>
<span class="t" style="left:195.04px;top:319.7px;font-size:10.9px;letter-spacing:0.16px;">9</span>
<div class="ck" style="left:214.6px;top:319.4px"></div>
<span class="t" style="left:235.9px;top:319.7px;font-size:10.7px;letter-spacing:0.03px;">2263</span>
<span class="t" style="left:268.6px;top:319.7px;font-size:10.7px;letter-spacing:0.25px;">/system/user/create</span>
<span class="t" style="left:411.2px;top:319.7px;font-size:10.7px;letter-spacing:0.23px;">admin</span>
<span class="t" style="left:456.6px;top:319.7px;font-size:10.7px;letter-spacing:0.12px;">2014-12-05 11:55:03</span>
<span class="t" style="left:600.3px;top:319.7px;font-size:10.7px;letter-spacing:0.1px;">Windows 7</span>
<span class="t" style="left:662.4px;top:319.7px;font-size:10.7px;letter-spacing:0.04px;">Firefox 3</span>
<span class="t" style="left:724px;top:319.7px;font-size:10.7px;letter-spacing:-0.34px;">127.0.0.1</span>
<span class="t" style="left:809.8px;top:319.7px;font-size:10.7px;letter-spacing:0.03px;">305</span>
<div style="left:208.4px;top:336.25px;width:669.4px;height:21.55px;background:#555"></div>
<div style="left:187.3px;top:336.25px;width:21.1px;height:21.55px;background:linear-gradient(#4c4c4c,#3f3f3f)"></div>
<span class="t" style="left:191.93px;top:340.95px;font-size:10.9px;letter-spacing:0.16px;">10</span>
<div class="ck" style="left:214.6px;top:340.65px"></div>
<span class="t" style="left:235.9px;top:340.95px;font-size:10.7px;letter-spacing:0.03px;">2264</span>
<span class="t" style="left:268.6px;top:340.95px;font-size:10.7px;letter-spacing:0.25px;">/system/permission/create</span>
<span class="t" style="left:411.2px;top:340.95px;font-size:10.7px;letter-spacing:0.23px;">admin</span>
<span class="t" style="left:456.6px;top:340.95px;font-size:10.7px;letter-spacing:0.12px;">2014-12-13 11:19:15</span>
<span class="t" style="left:600.3px;top:340.95px;font-size:10.7px;letter-spacing:0.1px;">Windows 7</span>
<span class="t" style="left:662.4px;top:340.95px;font-size:10.7px;letter-spacing:0.04px;">Firefox 3</span>
<span class="t" style="left:724px;top:340.95px;font-size:10.7px;letter-spacing:-0.34px;">127.0.0.1</span>
<span class="t" style="left:809.8px;top:340.95px;font-size:10.7px;letter-spacing:0.03px;">215</span>
<div style="left:208.4px;top:357.5px;width:669.4px;height:21.55px;background:#666"></div>
<div style="left:187.3px;top:357.5px;width:21.1px;height:21.55px;background:linear-gradient(#4c4c4c,#3f3f3f)"></div>
<span class="t" style="left:191.93px;top:362.2px;font-size:10.9px;letter-spacing:0.56px;">11</span>
<div class="ck" style="left:214.6px;top:361.9px"></div>
<span class="t" style="left:235.9px;top:362.2px;font-size:10.7px;letter-spacing:0.03px;">2265</span>
<span class="t" style="left:268.6px;top:362.2px;font-size:10.7px;letter-spacing:0.29px;">/system/permission/update</span>
<span class="t" style="left:411.2px;top:362.2px;font-size:10.7px;letter-spacing:0.23px;">admin</span>
<span class="t" style="left:456.6px;top:362.2px;font-size:10.7px;letter-spacing:0.12px;">2014-12-13 11:19:40</span>
<span class="t" style="left:600.3px;top:362.2px;font-size:10.7px;letter-spacing:0.1px;">Windows 7</span>
<span class="t" style="left:662.4px;top:362.2px;font-size:10.7px;letter-spacing:0.04px;">Firefox 3</span>
<span class="t" style="left:724px;top:362.2px;font-size:10.7px;letter-spacing:-0.34px;">127.0.0.1</span>
<span class="t" style="left:809.8px;top:362.2px;font-size:10.7px;letter-spacing:0.03px;">66</span>
<div style="left:208.4px;top:378.75px;width:669.4px;height:21.55px;background:#555"></div>
<div style="left:187.3px;top:378.75px;width:21.1px;height:21.55px;background:linear-gradient(#4c4c4c,#3f3f3f)"></div>
<span class="t" style="left:191.93px;top:383.45px;font-size:10.9px;letter-spacing:0.16px;">12</span>
<div class="ck" style="left:214.6px;top:383.15px"></div>
<span class="t" style="left:235.9px;top:383.45px;font-size:10.7px;letter-spacing:0.03px;">2266</span>
<span class="t" style="left:268.6px;top:383.45px;font-size:10.7px;letter-spacing:0.29px;">/system/permission/update</span>
<span class="t" style="left:411.2px;top:383.45px;font-size:10.7px;letter-spacing:0.23px;">admin</span>
<span class="t" style="left:456.6px;top:383.45px;font-size:10.7px;letter-spacing:0.12px;">2014-12-13 11:22:17</span>
<span class="t" style="left:600.3px;top:383.45px;font-size:10.7px;letter-spacing:0.1px;">Windows 7</span>
<span class="t" style="left:662.4px;top:383.45px;font-size:10.7px;letter-spacing:0.04px;">Firefox 3</span>
<span class="t" style="left:724px;top:383.45px;font-size:10.7px;letter-spacing:-0.34px;">127.0.0.1</span>
<span class="t" style="left:809.8px;top:383.45px;font-size:10.7px;letter-spacing:0.03px;">186</span>
<div class="hl" style="left:187.3px;top:166px;width:690.5px"></div>
<div class="hl" style="left:187.3px;top:187px;width:690.5px"></div>
<div class="hl" style="left:187.3px;top:208px;width:690.5px"></div>
<div class="hl" style="left:187.3px;top:230px;width:690.5px"></div>
<div class="hl" style="left:187.3px;top:251px;width:690.5px"></div>
<div class="hl" style="left:187.3px;top:272px;width:690.5px"></div>
<div class="hl" style="left:187.3px;top:293px;width:690.5px"></div>
<div class="hl" style="left:187.3px;top:315px;width:690.5px"></div>
<div class="hl" style="left:187.3px;top:336px;width:690.5px"></div>
<div class="hl" style="left:187.3px;top:357px;width:690.5px"></div>
<div class="hl" style="left:187.3px;top:378px;width:690.5px"></div>
<div class="hl" style="left:187.3px;top:400px;width:690.5px"></div>
<div class="ck" style="left:214.6px;top:128.1px"></div>
<span class="t" style="left:235.9px;top:129px;font-size:10.7px;letter-spacing:-0.35px;">ID</span>
<span class="t" style="left:268.6px;top:129px;font-size:10.7px;letter-spacing:-0.47px;">OPERATION_CODE</span>
<span class="t" style="left:411.2px;top:129px;font-size:10.7px;letter-spacing:0.03px;">creater</span>
<span class="t" style="left:456.6px;top:129px;font-size:10.7px;letter-spacing:-0.71px;">CREATE_DATE</span>
<span class="t" style="left:565.8px;top:129px;font-size:10.7px;letter-spacing:-1.14px;">TYPE</span>
<span class="t" style="left:600.3px;top:129px;font-size:10.7px;letter-spacing:-0.88px;">OS</span>
<span class="t" style="left:662.4px;top:129px;font-size:10.7px;letter-spacing:-0.84px;">BROWSER</span>
<span class="t" style="left:724px;top:129px;font-size:10.7px;letter-spacing:-0.9px;">IP</span>
<span class="t" style="left:775.3px;top:129px;font-size:10.7px;letter-spacing:-0.19px;">MAC</span>
<span class="t" style="left:809.8px;top:129px;font-size:10.7px;letter-spacing:-0.69px;width:68px;overflow:hidden;">EXECUTE_TIME</span>
<div class="vl" style="left:207.9px;top:123.2px;height:276.8px"></div>
<div class="vl" style="left:231.8px;top:123.2px;height:276.8px"></div>
<div class="vl" style="left:264.5px;top:123.2px;height:276.8px"></div>
<div class="vl" style="left:407.1px;top:123.2px;height:276.8px"></div>
<div class="vl" style="left:452.5px;top:123.2px;height:276.8px"></div>
<div class="vl" style="left:561.7px;top:123.2px;height:276.8px"></div>
<div class="vl" style="left:596.2px;top:123.2px;height:276.8px"></div>
<div class="vl" style="left:658.3px;top:123.2px;height:276.8px"></div>
<div class="vl" style="left:719.9px;top:123.2px;height:276.8px"></div>
<div class="vl" style="left:771.2px;top:123.2px;height:276.8px"></div>
<div class="vl" style="left:805.7px;top:123.2px;height:276.8px"></div>
</body></html>
